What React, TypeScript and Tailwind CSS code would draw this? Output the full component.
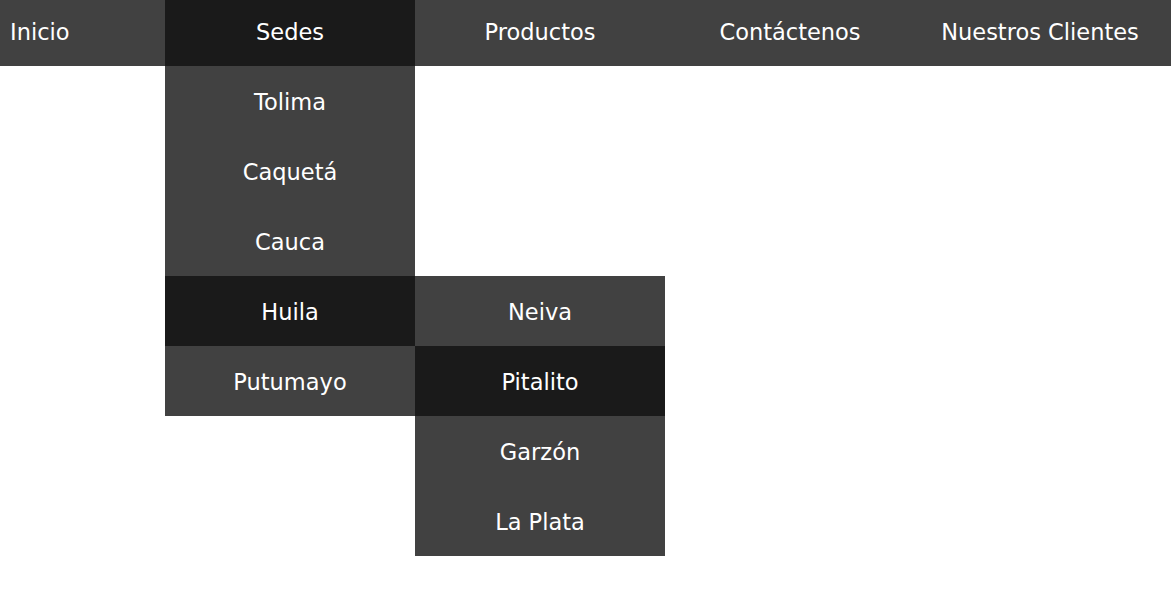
import React from "react";

const font = { fontFamily: '"DejaVu Sans", Verdana, sans-serif' };

export default function App() {
  const sedes = ["Tolima", "Caquetá", "Cauca", "Huila", "Putumayo"];
  const huila = ["Neiva", "Pitalito", "Garzón", "La Plata"];
  return (
    <div className="w-[1171px] h-[609px] bg-white text-white text-[22.5px] leading-none" style={font}>
      <nav className="flex h-[66px] bg-[#414141]">
        <div className="w-[165px] flex items-center pl-[10px] pb-[2px]">Inicio</div>
        <div className="relative w-[250px] flex items-center justify-center bg-[#1a1a1a]">
          <span className="pb-[2px]">Sedes</span>
          <ul className="absolute top-full left-0 w-[250px]">
            {sedes.map((s) => (
              <li
                key={s}
                className={`relative h-[70px] flex items-center justify-center pt-[2px] ${
                  s === "Huila" ? "bg-[#1a1a1a]" : "bg-[#414141]"
                }`}
              >
                {s}
                {s === "Huila" && (
                  <ul className="absolute top-0 left-full w-[250px]">
                    {huila.map((h) => (
                      <li
                        key={h}
                        className={`h-[70px] flex items-center justify-center pt-[2px] ${
                          h === "Pitalito" ? "bg-[#1a1a1a]" : "bg-[#414141]"
                        }`}
                      >
                        {h}
                      </li>
                    ))}
                  </ul>
                )}
              </li>
            ))}
          </ul>
        </div>
        <div className="w-[250px] flex items-center justify-center pb-[2px]">Productos</div>
        <div className="w-[250px] flex items-center justify-center pb-[2px]">Contáctenos</div>
        <div className="w-[250px] flex items-center justify-center pb-[2px]">Nuestros Clientes</div>
      </nav>
    </div>
  );
}
